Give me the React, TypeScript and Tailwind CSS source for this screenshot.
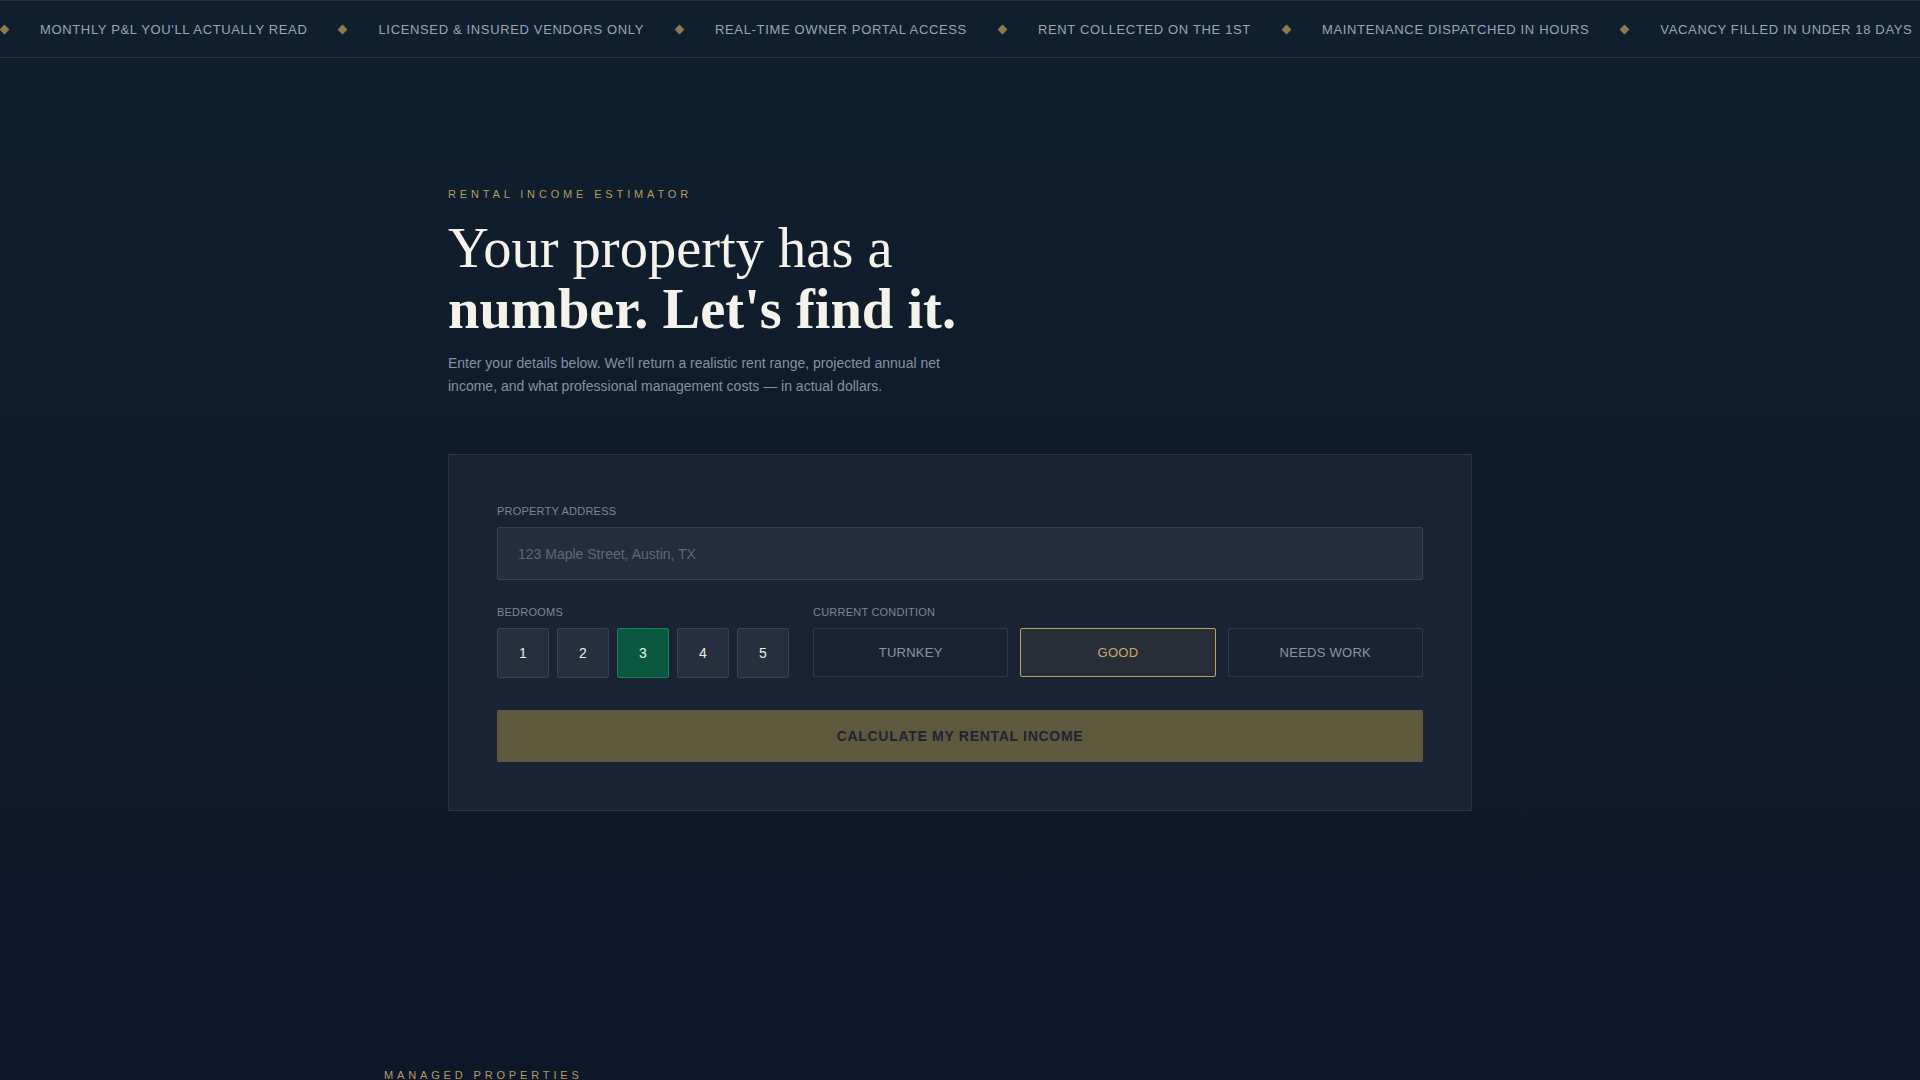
import { useState } from "react";

const tickerItems = [
  "MONTHLY P&L YOU'LL ACTUALLY READ",
  "LICENSED & INSURED VENDORS ONLY",
  "REAL-TIME OWNER PORTAL ACCESS",
  "RENT COLLECTED ON THE 1ST",
  "MAINTENANCE DISPATCHED IN HOURS",
  "VACANCY FILLED IN UNDER 18 DAYS",
];

const bedroomOptions = [1, 2, 3, 4, 5];
const conditions = ["TURNKEY", "GOOD", "NEEDS WORK"];

function Diamond() {
  return <span className="block w-[7px] h-[7px] rotate-45 bg-[#8c7c4c] shrink-0" />;
}

export default function App() {
  const [bedrooms, setBedrooms] = useState(3);
  const [condition, setCondition] = useState("GOOD");
  const [address, setAddress] = useState("");

  return (
    <div className="min-h-screen bg-gradient-to-b from-[#0f1f2d] via-[#0f1a2b] to-[#0e1629] font-['Liberation_Sans',Arial,sans-serif]">
      {/* Ticker */}
      <div className="h-[58px] border-y border-[#223238] bg-[#0f1f2d] overflow-hidden flex items-center">
        <div className="flex items-center gap-8 pl-px whitespace-nowrap">
          {[...tickerItems, ...tickerItems].map((item, i) => (
            <div key={i} className="flex items-center gap-8">
              <Diamond />
              <span className="text-[13px] leading-[17px] tracking-[0.05em] text-[#9ba6b3]">{item}</span>
            </div>
          ))}
        </div>
      </div>

      {/* Estimator */}
      <section className="px-6 pt-32 pb-32">
        <div className="max-w-[1024px] mx-auto">
          <p className="text-[11px] leading-4 tracking-[0.35em] text-[#b89c5e] mb-4">RENTAL INCOME ESTIMATOR</p>
          <h1 className="font-['Liberation_Serif','Times_New_Roman',serif] text-[56.5px] leading-[61px] text-[#f5f2ec] mb-3">
            Your property has a
            <br />
            <span className="font-bold">number. Let's find it.</span>
          </h1>
          <p className="max-w-[520px] text-[14px] leading-[23px] text-[#8791a0] mb-14">
            Enter your details below. We'll return a realistic rent range, projected annual net income, and what
            professional management costs — in actual dollars.
          </p>

          <div className="bg-[#1a2333] border border-[#283243] p-12">
            <label className="block text-[11px] leading-4 tracking-[0.02em] text-[#7b8595] mb-2">PROPERTY ADDRESS</label>
            <input
              value={address}
              onChange={(e) => setAddress(e.target.value)}
              placeholder="123 Maple Street, Austin, TX"
              className="w-full h-[53px] px-5 bg-[#232d3d] border border-[#364151] rounded-[2px] text-[14px] text-[#d5dae1] placeholder:text-[#5e697a] outline-none"
            />

            <div className="mt-6 flex gap-6">
              <div>
                <div className="text-[11px] leading-4 tracking-[0.02em] text-[#7b8595] mb-2">BEDROOMS</div>
                <div className="flex gap-2">
                  {bedroomOptions.map((n) => (
                    <button
                      key={n}
                      onClick={() => setBedrooms(n)}
                      className={`w-[52px] h-[50px] rounded-[2px] border text-[14px] ${
                        bedrooms === n
                          ? "bg-[#0b5840] border-[#1b8060] text-[#e6f2ec]"
                          : "bg-[#252f3e] border-[#374252] text-[#e8ebef]"
                      }`}
                    >
                      {n}
                    </button>
                  ))}
                </div>
              </div>

              <div className="flex-1">
                <div className="text-[11px] leading-4 tracking-[0.02em] text-[#7b8595] mb-2">CURRENT CONDITION</div>
                <div className="grid grid-cols-3 gap-3">
                  {conditions.map((c) => (
                    <button
                      key={c}
                      onClick={() => setCondition(c)}
                      className={`h-[49px] rounded-[2px] border text-[13px] tracking-[0.02em] ${
                        condition === c
                          ? "bg-[#272e37] border-[#bda263] text-[#c9aa62]"
                          : "bg-transparent border-[#2f3a4b] text-[#8a94a2]"
                      }`}
                    >
                      {c}
                    </button>
                  ))}
                </div>
              </div>
            </div>

            <button className="mt-8 w-full h-[52px] rounded-[2px] bg-[#5e593c] text-[14px] font-bold tracking-[0.05em] text-[#1c2434]">
              CALCULATE MY RENTAL INCOME
            </button>
          </div>
        </div>
      </section>

      {/* Managed properties */}
      <section className="px-6 pt-32 pb-32">
        <div className="max-w-[1152px] mx-auto">
          <p className="text-[11px] leading-4 tracking-[0.35em] text-[#b89c5e] mb-5">MANAGED PROPERTIES</p>
          <h2 className="font-['Liberation_Serif','Times_New_Roman',serif] text-[44px] leading-[48px] text-[#f5f2ec]">
            Homes we look after today.
          </h2>
        </div>
      </section>
    </div>
  );
}
